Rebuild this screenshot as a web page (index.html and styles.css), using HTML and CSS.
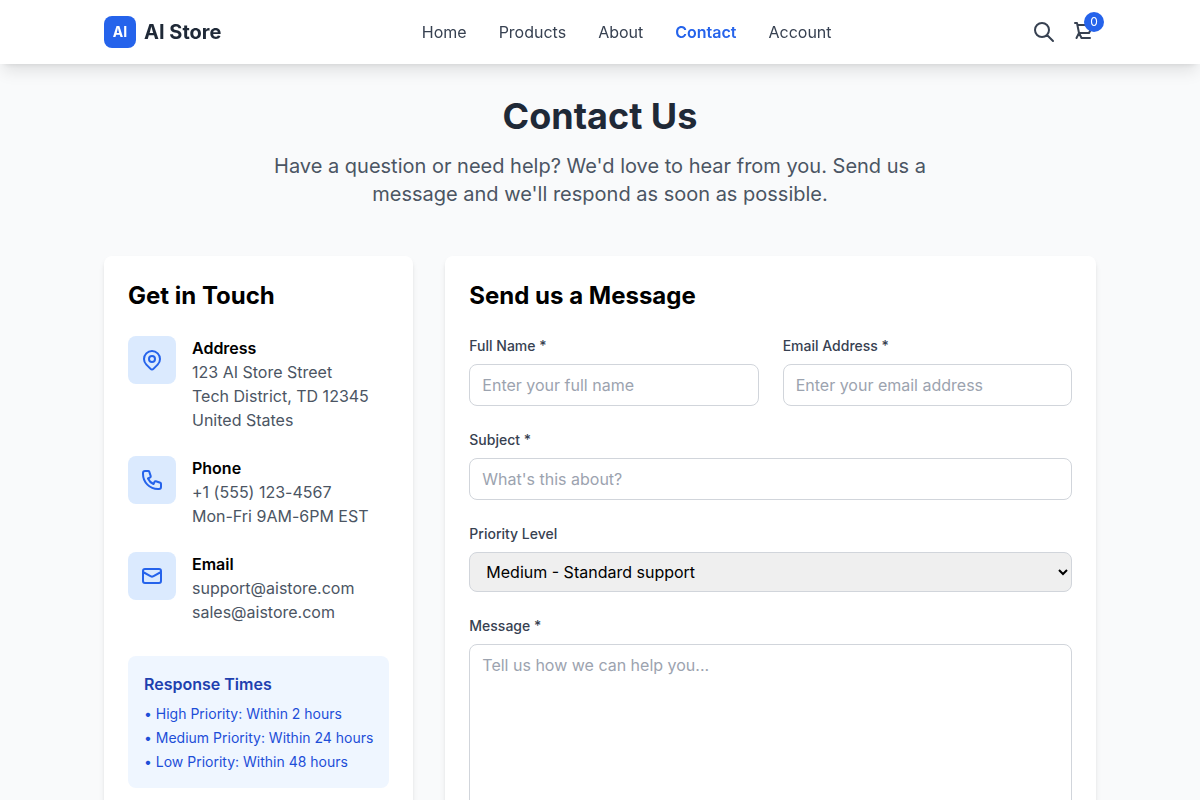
FILE: index.html
```html
<!DOCTYPE html>
<html lang="en">
<head>
<meta charset="utf-8">
<title>Contact - AI Store</title>
<link rel="stylesheet" href="styles.css">
</head>
<body>
<header class="header">
  <div class="container header-row">
    <a class="brand"><span class="logo">AI</span><span class="brand-name">AI Store</span></a>
    <nav class="nav"><a>Home</a><a>Products</a><a>About</a><a class="active">Contact</a><a>Account</a></nav>
    <div class="actions">
      <svg class="icon" viewBox="0 0 24 24"><path d="M21 21l-6-6m2-5a7 7 0 11-14 0 7 7 0 0114 0z"/></svg>
      <div class="cart">
        <svg class="icon" viewBox="0 0 24 24"><path d="M3 3h2l.4 2M7 13h10l4-8H5.4m0 0L7 13m0 0l-2.5 5M7 13l2.5 5m0 0H18"/></svg>
        <span class="badge">0</span>
      </div>
    </div>
  </div>
</header>
<main class="container main">
  <div class="hero">
    <h1>Contact Us</h1>
    <p>Have a question or need help? We'd love to hear from you. Send us a message and we'll respond as soon as possible.</p>
  </div>
  <div class="columns">
    <section class="card">
      <h2>Get in Touch</h2>
      <div class="contacts">
        <div class="contact">
          <div class="tile"><svg class="icon" viewBox="0 0 24 24"><path d="M17.657 16.657L13.414 20.9a1.998 1.998 0 01-2.827 0l-4.244-4.243a8 8 0 1111.314 0z"/><path d="M15 11a3 3 0 11-6 0 3 3 0 016 0z"/></svg></div>
          <div><h3>Address</h3><p>123 AI Store Street<br>Tech District, TD 12345<br>United States</p></div>
        </div>
        <div class="contact">
          <div class="tile"><svg class="icon" viewBox="0 0 24 24"><path d="M3 5a2 2 0 012-2h3.28a1 1 0 01.948.684l1.498 4.493a1 1 0 01-.502 1.21l-2.257 1.13a11.042 11.042 0 005.516 5.516l1.13-2.257a1 1 0 011.21-.502l4.493 1.498a1 1 0 01.684.949V19a2 2 0 01-2 2h-1C9.716 21 3 14.284 3 6V5z"/></svg></div>
          <div><h3>Phone</h3><p>+1 (555) 123-4567<br>Mon-Fri 9AM-6PM EST</p></div>
        </div>
        <div class="contact">
          <div class="tile"><svg class="icon" viewBox="0 0 24 24"><path d="M3 8l7.89 4.26a2 2 0 002.22 0L21 8M5 19h14a2 2 0 002-2V7a2 2 0 00-2-2H5a2 2 0 00-2 2v10a2 2 0 002 2z"/></svg></div>
          <div><h3>Email</h3><p>support@aistore.com<br>sales@aistore.com</p></div>
        </div>
      </div>
      <div class="response">
        <h3>Response Times</h3>
        <ul><li>• High Priority: Within 2 hours</li><li>• Medium Priority: Within 24 hours</li><li>• Low Priority: Within 48 hours</li></ul>
      </div>
    </section>
    <section class="card">
      <h2>Send us a Message</h2>
      <form class="form">
        <div class="pair">
          <div><label for="name">Full Name *</label><input id="name" type="text" placeholder="Enter your full name"></div>
          <div><label for="email">Email Address *</label><input id="email" type="email" placeholder="Enter your email address"></div>
        </div>
        <div><label for="subject">Subject *</label><input id="subject" type="text" placeholder="What's this about?"></div>
        <div><label for="priority">Priority Level</label><select id="priority"><option>Medium - Standard support</option></select></div>
        <div><label for="message">Message *</label><textarea id="message" rows="8" placeholder="Tell us how we can help you..."></textarea></div>
      </form>
    </section>
  </div>
</main>
</body>
</html>
```
FILE: styles.css
```css
*, *::before, *::after { box-sizing: border-box; margin: 0; padding: 0; }
html { height: 100%; }
body { height: 100%; overflow: hidden; background: #f9fafb; color: #000; font: 16px/24px Inter, sans-serif; }
.container { width: 100%; max-width: 1024px; margin: 0 auto; padding: 0 16px; }
.header { position: sticky; top: 0; z-index: 50; background: #fff; box-shadow: 0 10px 15px -3px rgba(0,0,0,.1), 0 4px 6px -4px rgba(0,0,0,.1); }
.header-row { display: flex; align-items: center; justify-content: space-between; height: 64px; }
.brand { display: flex; align-items: center; gap: 8px; }
.logo { display: flex; align-items: center; justify-content: center; width: 32px; height: 32px; border-radius: 8px; background: #2563eb; color: #fff; font-size: 14px; line-height: 20px; font-weight: 700; }
.brand-name { font-size: 20px; line-height: 28px; font-weight: 700; color: #1f2937; }
.nav { display: flex; gap: 32px; color: #374151; }
.active { color: #2563eb; font-weight: 600; }
.actions { display: flex; align-items: center; gap: 16px; color: #374151; }
.icon { display: block; width: 24px; height: 24px; fill: none; stroke: currentColor; stroke-width: 2; stroke-linecap: round; stroke-linejoin: round; }
.cart { position: relative; }
.badge { position: absolute; top: -8px; right: -8px; display: flex; align-items: center; justify-content: center; width: 20px; height: 20px; border-radius: 50%; background: #2563eb; color: #fff; font-size: 12px; line-height: 16px; }
.main { padding-top: 32px; padding-bottom: 32px; }
.hero { text-align: center; margin-bottom: 48px; }
.hero h1 { font-size: 36px; line-height: 40px; font-weight: 700; color: #1f2937; margin-bottom: 16px; }
.hero p { max-width: 672px; margin: 0 auto; font-size: 20px; line-height: 28px; color: #4b5563; }
.columns { display: grid; grid-template-columns: 309.33px 1fr; gap: 32px; }
.card { background: #fff; border-radius: 8px; padding: 24px; box-shadow: 0 4px 6px -1px rgba(0,0,0,.1), 0 2px 4px -2px rgba(0,0,0,.1); }
.card h2 { font-size: 24px; line-height: 32px; font-weight: 700; margin-bottom: 24px; }
.contacts { display: flex; flex-direction: column; gap: 24px; }
.contact { display: flex; align-items: flex-start; gap: 16px; }
.contact p { color: #4b5563; font-feature-settings: "calt" 0; }
.card h3 { font-size: 16px; line-height: 24px; font-weight: 600; }
.tile { display: flex; align-items: center; justify-content: center; flex: none; width: 48px; height: 48px; border-radius: 8px; background: #dbeafe; color: #2563eb; }
.response { margin-top: 32px; padding: 16px; border-radius: 8px; background: #eff6ff; }
.response h3 { color: #1e40af; margin-bottom: 8px; }
.response ul { display: flex; flex-direction: column; gap: 4px; list-style: none; color: #1d4ed8; font-size: 14px; line-height: 20px; white-space: nowrap; font-feature-settings: "calt" 0; }
.form { display: flex; flex-direction: column; gap: 24px; }
.pair { display: grid; grid-template-columns: 1fr 1fr; gap: 24px; }
label { display: block; margin-bottom: 8px; font-size: 14px; line-height: 20px; font-weight: 500; color: #374151; }
input, select, textarea { display: block; width: 100%; border: 1px solid #d1d5db; border-radius: 8px; padding: 8px 12px; font: inherit; color: #000; }
select { background: #efefef; height: 40px; }
textarea { resize: none; }
::placeholder { color: #9ca3af; opacity: 1; }
```
